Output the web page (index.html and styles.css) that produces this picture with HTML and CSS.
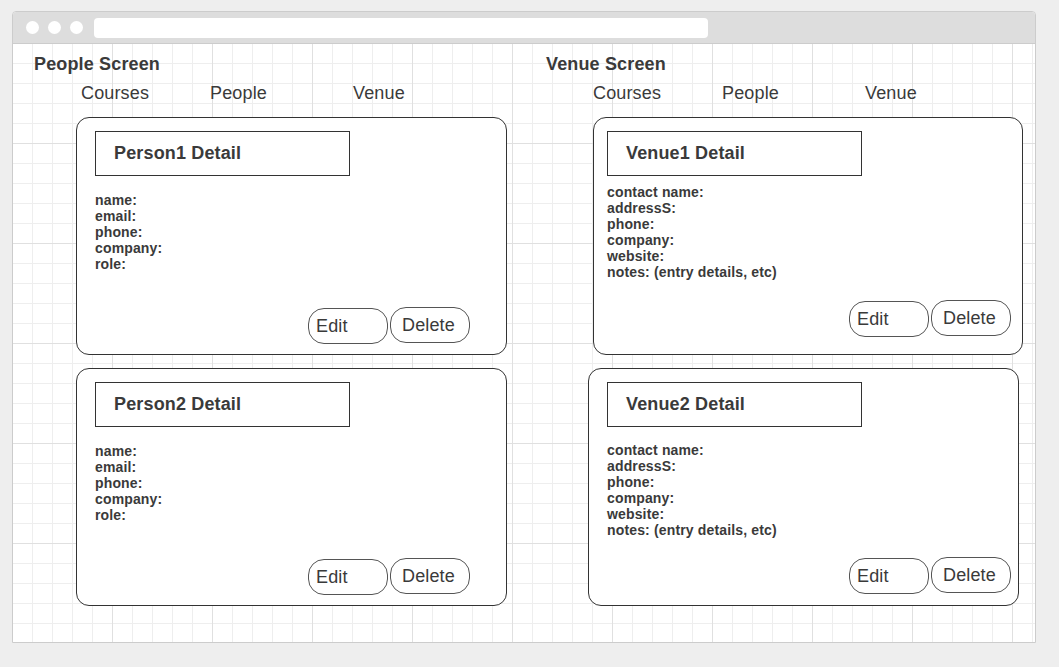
FILE: index.html
```html
<!DOCTYPE html>
<html>
<head>
<meta charset="utf-8">
<title>Screens</title>
<link rel="stylesheet" href="styles.css">
</head>
<body>
<div class="window">
  <div class="titlebar">
    <span class="dot"></span><span class="dot"></span><span class="dot"></span>
    <span class="address"></span>
  </div>
  <div class="canvas">
    <div class="columns">
      <section class="column">
        <h1 class="screen-title">People Screen</h1>
        <nav class="nav"><span class="nav-item nav-courses">Courses</span><span class="nav-item nav-people">People</span><span class="nav-item">Venue</span></nav>
        <div class="cards">
          <div class="card card-person">
            <div class="card-head">Person1 Detail</div>
            <div class="fields">name:<br>email:<br>phone:<br>company:<br>role:</div>
            <div class="actions"><button class="btn btn-edit">Edit</button><button class="btn btn-delete">Delete</button></div>
          </div>
          <div class="card card-person">
            <div class="card-head">Person2 Detail</div>
            <div class="fields">name:<br>email:<br>phone:<br>company:<br>role:</div>
            <div class="actions"><button class="btn btn-edit">Edit</button><button class="btn btn-delete">Delete</button></div>
          </div>
        </div>
      </section>
      <section class="column">
        <h1 class="screen-title">Venue Screen</h1>
        <nav class="nav"><span class="nav-item nav-courses">Courses</span><span class="nav-item nav-people">People</span><span class="nav-item">Venue</span></nav>
        <div class="cards">
          <div class="card card-venue1">
            <div class="card-head">Venue1 Detail</div>
            <div class="fields">contact name:<br>addressS:<br>phone:<br>company:<br>website:<br>notes: (entry details, etc)</div>
            <div class="actions"><button class="btn btn-edit">Edit</button><button class="btn btn-delete">Delete</button></div>
          </div>
          <div class="card card-venue2">
            <div class="card-head">Venue2 Detail</div>
            <div class="fields">contact name:<br>addressS:<br>phone:<br>company:<br>website:<br>notes: (entry details, etc)</div>
            <div class="actions"><button class="btn btn-edit">Edit</button><button class="btn btn-delete">Delete</button></div>
          </div>
        </div>
      </section>
    </div>
  </div>
</div>
</body>
</html>
```

FILE: styles.css
```css
* { box-sizing: border-box; }

html, body {
  margin: 0;
  padding: 0;
  background: #eeeeee;
  font-family: "Liberation Sans", Arial, sans-serif;
  color: #3a3a3a;
  letter-spacing: 0.15px;
}

.window {
  margin: 11px 0 0 12px;
  width: 1024px;
  height: 632px;
  border: 1px solid #cccccc;
  border-radius: 4px 4px 0 0;
  background: #ffffff;
  overflow: hidden;
}

.titlebar {
  height: 32px;
  background: #dddddd;
  border-bottom: 1px solid #cccccc;
  display: flex;
  align-items: center;
  padding-left: 13px;
  gap: 10px;
}

.dot {
  width: 13px;
  height: 13px;
  border-radius: 50%;
  background: #ffffff;
  flex: none;
}

.dot + .dot { margin-left: -1px; }

.address {
  width: 614px;
  height: 20px;
  margin-left: 1px;
  background: #ffffff;
  border-radius: 4px;
}

.canvas {
  height: 598px;
  background-color: #ffffff;
  background-image:
    linear-gradient(to right, #e0e0e0 1px, transparent 1px),
    linear-gradient(to bottom, #e0e0e0 1px, transparent 1px),
    linear-gradient(to right, #eeeeee 1px, transparent 1px),
    linear-gradient(to bottom, #eeeeee 1px, transparent 1px);
  background-size: 100px 100px, 100px 100px, 20px 20px, 20px 20px;
  background-position: -1px -1px, -1px -1px, -1px -1px, -1px -1px;
}

.columns {
  margin-left: -1px;
  display: grid;
  grid-template-columns: 512px 512px;
}

.column {
  padding-top: 9px;
}

.screen-title {
  margin: 0 0 0 22px;
  font-size: 18px;
  line-height: 22px;
  font-weight: bold;
}

.nav {
  margin: 7px 0 0 69px;
  display: flex;
  font-size: 18px;
  line-height: 22px;
}

.nav-courses { width: 129px; }
.nav-people { width: 143px; }

.cards {
  margin-top: 13px;
  display: flex;
  flex-direction: column;
  gap: 13px;
}

.card {
  height: 238px;
  width: 431px;
  margin-left: 64px;
  border: 1px solid #333333;
  border-radius: 13px;
  background: #ffffff;
  padding: 13px 0 0 18px;
  display: flex;
  flex-direction: column;
  align-items: flex-start;
}

.card-head {
  width: 255px;
  height: 45px;
  border: 1px solid #333333;
  padding-left: 18px;
  font-size: 18px;
  line-height: 43px;
  font-weight: bold;
}

.fields {
  margin-top: 16px;
  font-size: 14px;
  line-height: 16px;
  font-weight: bold;
}

.actions {
  margin-top: auto;
  align-self: stretch;
  display: flex;
  justify-content: flex-end;
  align-items: flex-start;
  gap: 2px;
  padding: 0 36px 10px 0;
}

.card-venue1 {
  width: 430px;
  margin-left: 69px;
  padding-left: 13px;
}
.card-venue1 .fields { margin-top: 8px; }
.card-venue1 .actions { padding: 0 11px 17px 0; }

.card-venue2 .fields { margin-top: 15px; }
.card-venue2 .actions { padding: 0 7px 11px 0; }

.btn {
  width: 80px;
  height: 36px;
  margin: 0;
  border: 1px solid #555555;
  border-radius: 16px;
  background: #ffffff;
  color: #3a3a3a;
  font-family: "Liberation Sans", Arial, sans-serif;
  font-size: 18px;
  letter-spacing: 0.15px;
  line-height: 34px;
  text-align: left;
  padding: 0 0 0 7px;
}

.btn-edit { margin-top: 1px; }
.btn-delete { padding-left: 11px; }
```
